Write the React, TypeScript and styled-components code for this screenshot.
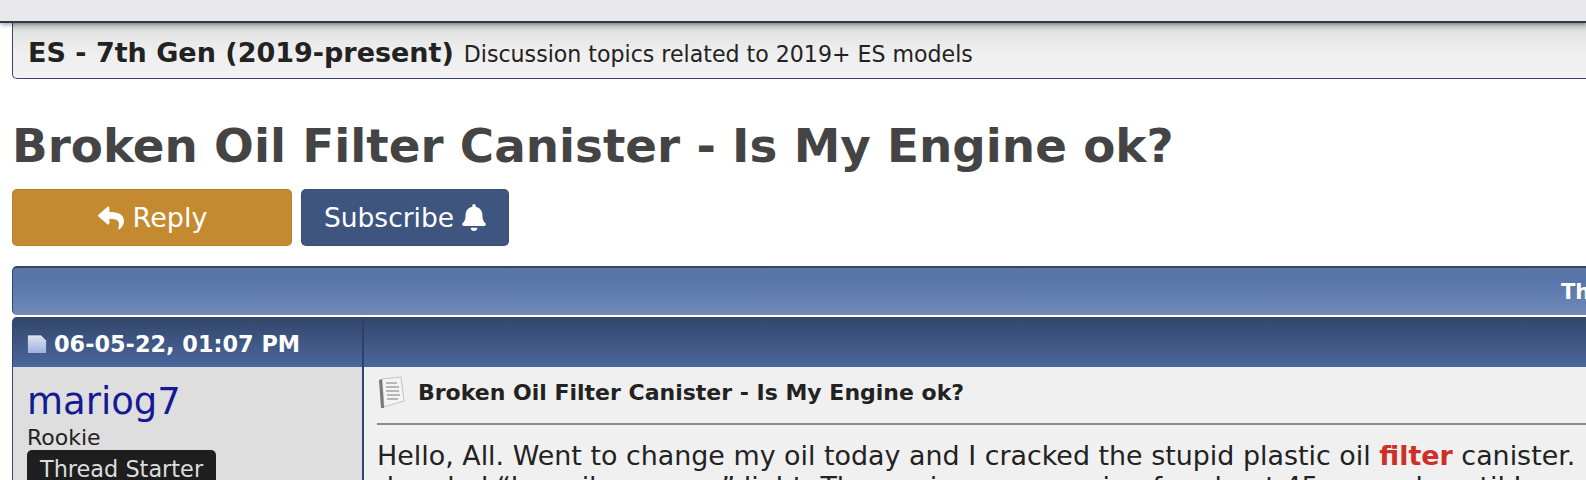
import React from "react";
import styled, { createGlobalStyle } from "styled-components";

const Global = createGlobalStyle`
  html, body { margin: 0; padding: 0; background: #fff; overflow: hidden; }
  body { width: 1586px; height: 480px; font-family: "DejaVu Sans", Verdana, sans-serif; color: #222; }
`;

const Page = styled.div`
  width: 1586px;
  height: 480px;
  overflow: hidden;
`;

const TopBar = styled.div`
  position: relative;
  z-index: 2;
  height: 21px;
  background: #e9e9eb;
  border-bottom: 2px solid #2f3a4f;
  box-shadow: 0 1px 5px rgba(0, 0, 0, 0.45);
`;

const Content = styled.div`
  width: 1900px;
  padding-left: 12px;
`;

const ForumBar = styled.div`
  height: 56px;
  box-sizing: border-box;
  display: flex;
  align-items: center;
  gap: 10px;
  padding: 4px 0 0 15px;
  border: 1px solid #34466f;
  border-top: 0;
  border-right: 0;
  border-radius: 0 0 0 5px;
  background: linear-gradient(#c9c9c9 0, #e4e4e4 10px, #efefef 30px, #f3f1f3 100%);
`;

const ForumName = styled.strong`
  font-size: 27px;
  font-weight: 700;
  color: #222;
  white-space: nowrap;
`;

const ForumDesc = styled.span`
  font-size: 22.1px;
  color: #222;
  white-space: nowrap;
  position: relative;
  top: 1px;
`;

const Title = styled.h1`
  margin: 37px 0 0;
  font-size: 46.8px;
  line-height: 60px;
  font-weight: 700;
  color: #444;
  white-space: nowrap;
`;

const Actions = styled.div`
  display: flex;
  gap: 9px;
  margin-top: 13px;
`;

const ActionButton = styled.button<{ $tone: string; $width: number }>`
  width: ${(p) => p.$width}px;
  height: 57px;
  padding: 0;
  border: 1px solid rgba(0, 0, 0, 0.08);
  border-radius: 5px;
  background: ${(p) => p.$tone};
  color: #fff;
  font-family: "DejaVu Sans", Verdana, sans-serif;
  font-size: ${(p) => (p.$width > 250 ? 27 : 26.5)}px;
  display: flex;
  align-items: center;
  justify-content: center;
  gap: 8px;
`;

const ThreadBar = styled.div`
  margin-top: 20px;
  height: 49px;
  box-sizing: border-box;
  border: 1px solid #34466f;
  border-width: 2px 0 0 1px;
  border-radius: 5px 0 0 5px;
  background: linear-gradient(#59779f, #5674aa 20%, #7089b8);
  width: 1900px;
  display: flex;
  align-items: center;
  padding: 0 0 0 1548px;
`;

const ThreadText = styled.span`
  color: #fff;
  font-size: 21px;
  font-weight: 700;
  white-space: nowrap;
`;

const PostHead = styled.div`
  margin-top: 2px;
  height: 50px;
  display: grid;
  grid-template-columns: 351px 1fr;
  background: linear-gradient(#324669, #4a679d);
  border-radius: 5px 0 0 0;
  border-left: 1px solid #34466f;
`;

const DateCell = styled.div`
  display: flex;
  align-items: center;
  gap: 7px;
  padding: 3px 0 0 14px;
  border-right: 2px solid #2d4066;
  color: #fff;
  font-size: 22.4px;
  font-weight: 700;
  white-space: nowrap;
`;

const PostBody = styled.div`
  display: grid;
  grid-template-columns: 351px 1fr;
  height: 120px;
  border-left: 1px solid #34466f;
`;

const UserCell = styled.div`
  background: #dedede;
  border-right: 2px solid #34466f;
  padding: 13px 0 0 14px;
`;

const UserName = styled.div`
  font-size: 37px;
  line-height: 44px;
  color: #151a94;
`;

const Rank = styled.div`
  font-size: 22px;
  line-height: 25px;
  color: #222;
  margin-top: 1px;
`;

const Badge = styled.div`
  display: inline-block;
  padding: 6px 13px 4px;
  background: #1e1e1e;
  color: #ddd;
  font-size: 22.4px;
  line-height: 26px;
  border-radius: 5px;
  white-space: nowrap;
`;

const MessageCell = styled.div`
  background: #f0f0f0;
  padding: 9px 0 0 13px;
`;

const SubjectRow = styled.div`
  display: flex;
  align-items: flex-start;
  gap: 13px;
  height: 47px;
  border-bottom: 2px solid #8a8a8a;
`;

const Subject = styled.strong`
  font-size: 22px;
  line-height: 33px;
  color: #222;
  white-space: nowrap;
`;

const Message = styled.div`
  margin-top: 15px;
  font-size: 26.9px;
  line-height: 31px;
  color: #222;
  white-space: nowrap;
`;

const Hit = styled.b`
  color: #cc3026;
`;

const DocSvg = styled.svg`
  filter: blur(0.4px);
`;

const ReplyIcon = () => (
  <svg width="28" height="26" viewBox="0 0 512 512" fill="#fff">
    <path d="M8.3 189.8 184.3 37.8c15.4-13.3 39.7-2.5 39.7 18.2v80.1c160.6 1.8 288 34 288 186.3 0 61.5-39.6 122.4-83.4 154.2-13.7 9.9-33.1-2.5-28.1-18.6 45.4-145.2-21.5-183.7-176.5-185.9V360c0 20.7-24.3 31.5-39.7 18.2l-176-152c-11.1-9.6-11.1-26.8 0-36.4z" />
  </svg>
);

const BellIcon = () => (
  <svg width="24" height="27" viewBox="0 0 448 512" fill="#fff">
    <path d="M224 512c35.3 0 64-28.7 64-64H160c0 35.3 28.7 64 64 64zm215.4-149.7c-19.3-20.8-55.5-52-55.5-154.3 0-77.7-54.5-139.9-128-155.2V32c0-17.7-14.3-32-32-32s-32 14.3-32 32v20.8C118.4 68.1 64 130.3 64 208c0 102.3-36.2 133.5-55.5 154.3-6 6.4-8.6 14.1-8.5 21.7.1 16.4 13 32 32.1 32h383.8c19.1 0 32-15.6 32.1-32 .1-7.6-2.5-15.3-8.5-21.7z" />
  </svg>
);

const PostIcon = () => (
  <svg width="20" height="20" viewBox="0 0 20 20">
    <defs>
      <linearGradient id="postIconFill" x1="0" y1="0" x2="0" y2="1">
        <stop offset="0" stopColor="#dfe5f3" />
        <stop offset="1" stopColor="#9db0dc" />
      </linearGradient>
    </defs>
    <path d="M0.5 1H14L19.5 6.5V19.5H0.5Z" fill="url(#postIconFill)" stroke="#2e3f66" strokeWidth="0.6" />
  </svg>
);

const DocIcon = () => (
  <DocSvg width="28" height="33" viewBox="0 0 28 33">
    <path d="M5 3 L24 1 L27 25 L7 31 Z" fill="#f4f4f4" stroke="#c4c4c4" strokeWidth="1" />
    <path d="M2 4 L5 3 L7 32 L4 32 Z" fill="#777" />
    <g stroke="#b0b0b0" strokeWidth="1.8">
      <path d="M9 7 H20" />
      <path d="M9 11 H22" />
      <path d="M9 15 H22" />
      <path d="M10 19 H23" />
      <path d="M10 23 H21" />
    </g>
  </DocSvg>
);

export default function App() {
  return (
    <Page>
      <Global />
      <TopBar />
      <Content>
        <ForumBar>
          <ForumName>ES - 7th Gen (2019-present)</ForumName>
          <ForumDesc>Discussion topics related to 2019+ ES models</ForumDesc>
        </ForumBar>
        <Title>Broken Oil Filter Canister - Is My Engine ok?</Title>
        <Actions>
          <ActionButton $tone="#c48a2f" $width={280}>
            <ReplyIcon /> Reply
          </ActionButton>
          <ActionButton $tone="#3d557f" $width={208}>
            Subscribe <BellIcon />
          </ActionButton>
        </Actions>
        <ThreadBar>
          <ThreadText>Thread Tools</ThreadText>
        </ThreadBar>
        <PostHead>
          <DateCell>
            <PostIcon />
            06-05-22, 01:07 PM
          </DateCell>
          <div />
        </PostHead>
        <PostBody>
          <UserCell>
            <UserName>mariog7</UserName>
            <Rank>Rookie</Rank>
            <Badge>Thread Starter</Badge>
          </UserCell>
          <MessageCell>
            <SubjectRow>
              <DocIcon />
              <Subject>Broken Oil Filter Canister - Is My Engine ok?</Subject>
            </SubjectRow>
            <Message>
              Hello, All. Went to change my oil today and I cracked the stupid plastic oil <Hit>filter</Hit> canister. I
              <br />
              dreaded “low oil pressure” light. The engine was running for about 45 seconds until I
            </Message>
          </MessageCell>
        </PostBody>
      </Content>
    </Page>
  );
}
